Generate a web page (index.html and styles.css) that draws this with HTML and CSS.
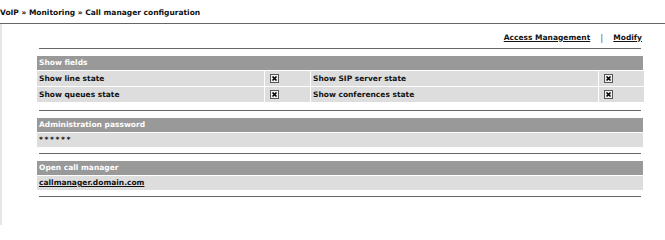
FILE: index.html
```html
<!DOCTYPE html>
<html>
<head>
<meta charset="utf-8">
<link rel="stylesheet" href="styles.css">
</head>
<body>
<div class="title">VoIP » Monitoring » Call manager configuration</div>
<div class="content">
  <div class="actions">
    <a href="#">Access Management</a>
    <span class="sep">|</span>
    <a href="#">Modify</a>
  </div>
  <div class="panel">
    <hr class="rule">
    <section class="block block-fields">
      <div class="head">Show fields</div>
      <div class="fields">
        <div class="cell label">Show line state</div>
        <div class="cell check"><svg class="cb" width="9" height="9" viewBox="0 0 9 9"><rect x="0.5" y="0.5" width="8" height="8" fill="#f2f2f2" stroke="#555"/><path d="M2.5 2.5 L6.5 6.5 M6.5 2.5 L2.5 6.5" stroke="#000" stroke-width="1.7"/></svg></div>
        <div class="cell label">Show SIP server state</div>
        <div class="cell check"><svg class="cb" width="9" height="9" viewBox="0 0 9 9"><rect x="0.5" y="0.5" width="8" height="8" fill="#f2f2f2" stroke="#555"/><path d="M2.5 2.5 L6.5 6.5 M6.5 2.5 L2.5 6.5" stroke="#000" stroke-width="1.7"/></svg></div>
        <div class="cell label">Show queues state</div>
        <div class="cell check"><svg class="cb" width="9" height="9" viewBox="0 0 9 9"><rect x="0.5" y="0.5" width="8" height="8" fill="#f2f2f2" stroke="#555"/><path d="M2.5 2.5 L6.5 6.5 M6.5 2.5 L2.5 6.5" stroke="#000" stroke-width="1.7"/></svg></div>
        <div class="cell label">Show conferences state</div>
        <div class="cell check"><svg class="cb" width="9" height="9" viewBox="0 0 9 9"><rect x="0.5" y="0.5" width="8" height="8" fill="#f2f2f2" stroke="#555"/><path d="M2.5 2.5 L6.5 6.5 M6.5 2.5 L2.5 6.5" stroke="#000" stroke-width="1.7"/></svg></div>
      </div>
    </section>
    <hr class="rule">
    <section class="block">
      <div class="head">Administration password</div>
      <div class="row secret">******</div>
    </section>
    <hr class="rule">
    <section class="block">
      <div class="head">Open call manager</div>
      <div class="row"><a href="#">callmanager.domain.com</a></div>
    </section>
    <hr class="rule">
  </div>
</div>
</body>
</html>
```
FILE: styles.css
```css
html, body {
  margin: 0;
  padding: 0;
  background: #fff;
}
body {
  font-family: "DejaVu Sans", Verdana, sans-serif;
  font-size: 7.5px;
  font-weight: bold;
  color: #111;
}
.title {
  box-sizing: border-box;
  height: 24px;
  padding-top: 8px;
  line-height: 10px;
  border-bottom: 1px solid #666;
}
.content {
  box-sizing: border-box;
  border-left: 2px solid #e6e6e6;
  height: 201px;
  padding: 0 22px 0 35px;
}
.actions {
  box-sizing: border-box;
  display: flex;
  justify-content: flex-end;
  align-items: center;
  gap: 10px;
  height: 24px;
  padding: 3px 1px 0 0;
  line-height: 10px;
  width: 606px;
}
a {
  color: #111;
  text-decoration: underline;
}
.sep {
  font-weight: normal;
  color: #666;
  font-size: 9px;
}
.panel {
  width: 606px;
}
.rule {
  margin: 0 2px;
  border: 0;
  border-top: 1px solid #666;
  height: 0;
}
.block {
  margin: 7px 0 6px;
}
.block-fields {
  margin-bottom: 8px;
}
.head {
  background: #999;
  color: #fff;
  height: 14px;
  line-height: 14px;
  padding: 0 2px;
  border-bottom: 1px solid #fff;
}
.row {
  background: #ddd;
  height: 14px;
  line-height: 14px;
  padding: 0 2px;
}
.secret {
  letter-spacing: 1.6px;
}
.fields {
  display: grid;
  grid-template-columns: 227px 45px 287px 45px;
  gap: 1px;
  background: #fff;
}
.cell {
  background: #ddd;
  height: 15px;
  line-height: 15px;
  padding: 0 2px;
}
.check {
  display: flex;
  align-items: center;
  padding-left: 5px;
}
.cb { display: block; }
```
